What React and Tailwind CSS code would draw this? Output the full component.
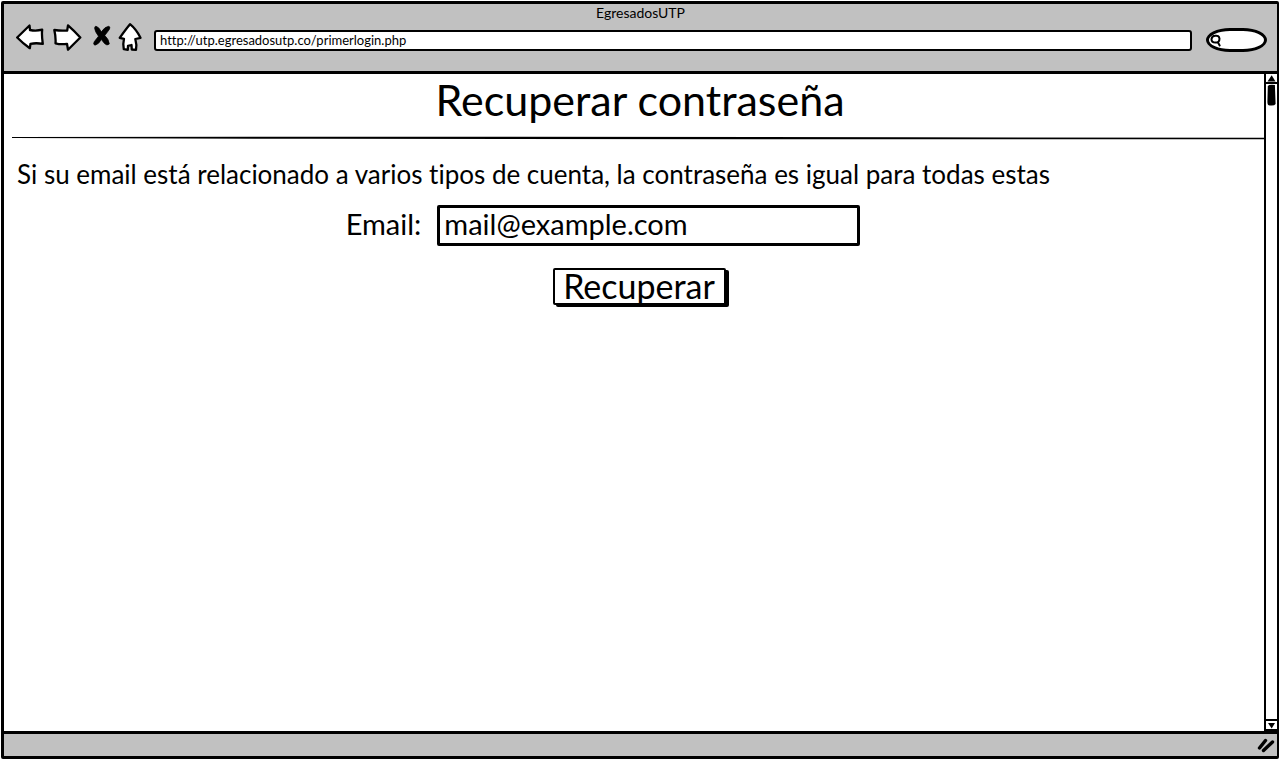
const iconStroke = {
  fill: "white",
  stroke: "black",
  strokeWidth: 2.3,
  strokeLinejoin: "round",
  strokeLinecap: "round",
};

function BackIcon() {
  return (
    <svg width="30" height="30" viewBox="0 0 30 30" {...iconStroke}>
      <path d="M1.2 15.5 L13.5 3.5 L14 8 Q20 9.2 26.2 7.7 Q25.5 13 26.8 21.8 Q20 20.7 14.5 21.8 L13.8 26.2 Q7 21.5 1.2 15.5Z" />
    </svg>
  );
}

function ForwardIcon() {
  return (
    <svg width="30" height="30" viewBox="0 0 30 30" {...iconStroke}>
      <path d="M1.3 8 Q8 9 14.2 8.5 L15 3.3 Q21 8.5 27.3 15.5 L15 27.8 L14 21.8 Q8 22.8 2.5 21.3 Q3 15 1.3 8Z" />
    </svg>
  );
}

function StopIcon() {
  return (
    <svg width="20" height="24" viewBox="0 0 20 24" fill="black">
      <path d="M4 2.2 Q7 3 9.3 7.8 Q13 2.5 16.8 2.3 Q18.8 2.8 17.3 5.5 L12.8 11.5 Q17 15.5 17.3 20 Q15 22.2 12.5 19.5 L9.3 15.5 Q6.8 20.3 3 21.2 Q.8 20.8 2.2 17.8 L6.5 12.2 Q2.8 7.5 2.6 4 Q3 2 4 2.2Z" stroke="black" strokeWidth=".7" />
    </svg>
  );
}

function HomeIcon() {
  return (
    <svg width="24" height="30" viewBox="0 0 24 30" {...iconStroke}>
      <path d="M12 2.2 Q8 7 1.7 15.8 L6 16.8 Q4.7 22 5.8 27.2 L9.8 27.8 L10 23.8 L13.5 23 L13.8 27.5 L18 27.8 Q19 23 17.3 17 L22.5 15.8 Q18 7 12 2.2Z" />
    </svg>
  );
}

function SearchIcon() {
  return (
    <svg width="12" height="13" viewBox="0 0 12 13" fill="none" stroke="black" strokeWidth="2" strokeLinecap="round" className="shrink-0">
      <path d="M5 1.8 Q9 1 9.5 4.6 Q9.6 8.6 5.5 8.6 Q1.4 8.4 1.5 5.2 Q1.8 2 5 1.8Z M8 8.5 L9.7 11.5" />
    </svg>
  );
}

function BrowserBar() {
  return (
    <header className="h-[70px] shrink-0 border-b-[3px] border-black bg-[#c1c1c1]">
      <p className="h-[18px] text-center text-[14px] leading-[18px]">EgresadosUTP</p>
      <div className="flex h-9 items-center pr-2.5 pl-3">
        <nav aria-label="Navegación" className="mr-3 flex h-9 shrink-0 items-start">
          <button type="button" aria-label="Atrás"><BackIcon /></button>
          <button type="button" aria-label="Adelante" className="ml-[7px]"><ForwardIcon /></button>
          <button type="button" aria-label="Detener" className="ml-[9px] pt-0.5"><StopIcon /></button>
          <button type="button" aria-label="Inicio" className="ml-1.5"><HomeIcon /></button>
        </nav>
        <input
          type="text"
          aria-label="Dirección"
          defaultValue="http://utp.egresadosutp.co/primerlogin.php"
          className="h-[21px] min-w-0 flex-1 rounded-[3px] border-2 border-black bg-white px-1 text-[13px] leading-4 outline-none"
        />
        <label className="ml-3.5 flex h-6 w-[61px] shrink-0 items-center rounded-[24px/12px] border-[3px] border-black bg-white pl-px">
          <SearchIcon />
          <input type="text" aria-label="Buscar" className="w-8 bg-transparent outline-none" />
        </label>
      </div>
    </header>
  );
}

function ScrollBar() {
  return (
    <div className="flex w-[13px] shrink-0 flex-col border-l-2 border-black">
      <button type="button" aria-label="Subir" className="flex h-2.5 items-center justify-center border-b-2 border-black">
        <svg width="9" height="7" viewBox="0 0 9 7"><path d="M.5 6.5 L4.7 .3 L8.5 6.5Z" /></svg>
      </button>
      <div className="flex-1">
        <svg className="mx-auto" width="9" height="22" viewBox="0 0 9 22">
          <path d="M.8 2 Q2 .3 7.9 1 L8.6 20 Q7.5 22 3 21.5 Q.4 21.7 .4 18Z" />
        </svg>
      </div>
      <button type="button" aria-label="Bajar" className="flex h-3 items-center justify-center border-y-2 border-black">
        <svg width="9" height="7" viewBox="0 0 9 7"><path d="M1 1 L8 1 L4.7 6.5Z" /></svg>
      </button>
    </div>
  );
}

export default function App() {
  return (
    <div className="min-h-screen bg-white p-px font-['Lato',sans-serif] text-black [font-variant-ligatures:none]">
      <div className="flex min-h-[calc(100vh-2px)] flex-col rounded-[2px] border-[3px] border-r-2 border-black">
        <BrowserBar />
        <div className="flex flex-1">
          <main className="min-w-0 flex-1 pl-2">
            <h1 className="pt-1 pl-1 text-center text-[43px] leading-[44px]">Recuperar contraseña</h1>
            <svg className="mt-3.5 block h-1 w-full" viewBox="0 0 1256 4" preserveAspectRatio="none" aria-hidden="true">
              <path d="M0 1 L300 .7 L900 1.2 L1256 1.8 L1256 3.2 L800 3.2 L300 2.8 L0 2Z" />
            </svg>
            <p className="pt-[18px] pl-[5px] text-[26px] leading-8">
              Si su email está relacionado a varios tipos de cuenta, la contraseña es igual para todas estas
            </p>
            <form onSubmit={(event) => event.preventDefault()}>
              <div className="mt-[15px] flex items-center justify-center gap-4 pr-[70px]">
                <label htmlFor="email" className="-mt-1 text-[29px] leading-8">Email:</label>
                <input
                  id="email"
                  type="email"
                  defaultValue="mail@example.com"
                  className="h-[41px] w-[423px] rounded-[2px] border-[3px] border-black px-1 pb-1 text-[29px] leading-8 outline-none"
                />
              </div>
              <div className="mt-[22px] flex justify-center pl-0.5">
                <button type="submit" className="flex h-[37px] w-[173px] items-center justify-center rounded-[2px] border-2 border-black bg-white pb-0.5 text-[34px] leading-8 shadow-[3px_2px_0_0_#000]">
                  Recuperar
                </button>
              </div>
            </form>
          </main>
          <ScrollBar />
        </div>
        <footer className="flex h-[25px] shrink-0 items-center justify-end border-t-[3px] border-black bg-[#c1c1c1] pr-0.5">
          <svg width="18" height="16" viewBox="0 0 18 16" fill="none" stroke="black" strokeWidth="3.4" strokeLinecap="round" aria-hidden="true">
            <path d="M2.5 11 L8.5 3.5 M6.5 13.5 L15.5 5" />
          </svg>
        </footer>
      </div>
    </div>
  );
}
